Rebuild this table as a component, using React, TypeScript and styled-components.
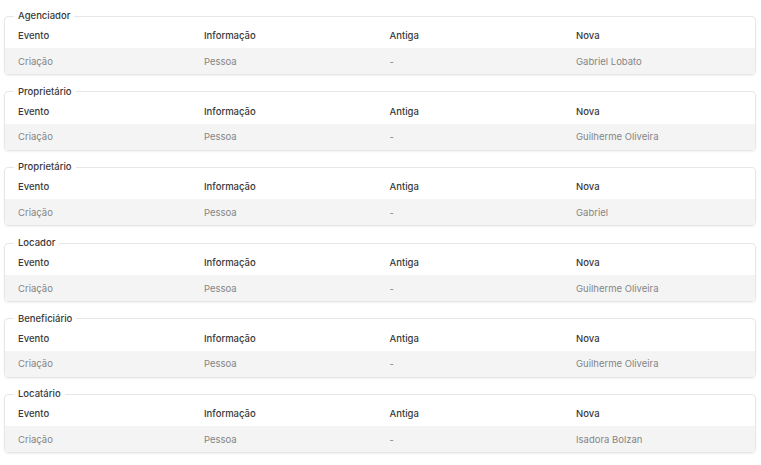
import React from 'react';
import styled, { createGlobalStyle } from 'styled-components';

const GlobalStyle = createGlobalStyle`
	body {
		margin: 0;
		background: #fff;
		font-family: Inter, 'Noto Sans', sans-serif;
	}
`;

const Page = styled.div`
	padding: 9px 5px 0 4px;
`;

const Card = styled.fieldset`
	margin: 0 0 9.7px;
	padding: 0;
	min-width: 0;
	border: 1px solid #e6e6e6;
	border-radius: 4px;
	box-shadow: 0 1px 2px rgba(0, 0, 0, 0.06);
	background: #fff;
`;

const Legend = styled.legend`
	margin-left: 9px;
	padding: 0 4px;
	font-size: 9.5px;
	line-height: 14px;
	font-weight: 500;
	color: #3a3a3a;
`;

const Row = styled.div<{ $body?: boolean }>`
	display: grid;
	grid-template-columns: 186px 185.5px 186.5px 1fr;
	align-items: center;
	height: ${(p) => (p.$body ? '26px' : '25px')};
	padding-left: 13px;
	background: ${(p) => (p.$body ? '#f4f4f4' : 'transparent')};
	border-radius: ${(p) => (p.$body ? '0 0 3px 3px' : '0')};
	font-size: 9.5px;
	font-weight: ${(p) => (p.$body ? 400 : 500)};
	color: ${(p) => (p.$body ? '#858585' : '#3a3a3a')};
`;

const cards = [
	{ title: 'Agenciador', value: 'Gabriel Lobato' },
	{ title: 'Proprietário', value: 'Guilherme Oliveira' },
	{ title: 'Proprietário', value: 'Gabriel' },
	{ title: 'Locador', value: 'Guilherme Oliveira' },
	{ title: 'Beneficiário', value: 'Guilherme Oliveira' },
	{ title: 'Locatário', value: 'Isadora Bolzan' },
];

const App = () => {
	return (
		<>
			<GlobalStyle />
			<Page>
				{cards.map((card, i) => (
					<Card key={i}>
						<Legend>{card.title}</Legend>
						<Row>
							<span>Evento</span>
							<span>Informação</span>
							<span>Antiga</span>
							<span>Nova</span>
						</Row>
						<Row $body>
							<span>Criação</span>
							<span>Pessoa</span>
							<span>-</span>
							<span>{card.value}</span>
						</Row>
					</Card>
				))}
			</Page>
		</>
	);
};

export default App;
